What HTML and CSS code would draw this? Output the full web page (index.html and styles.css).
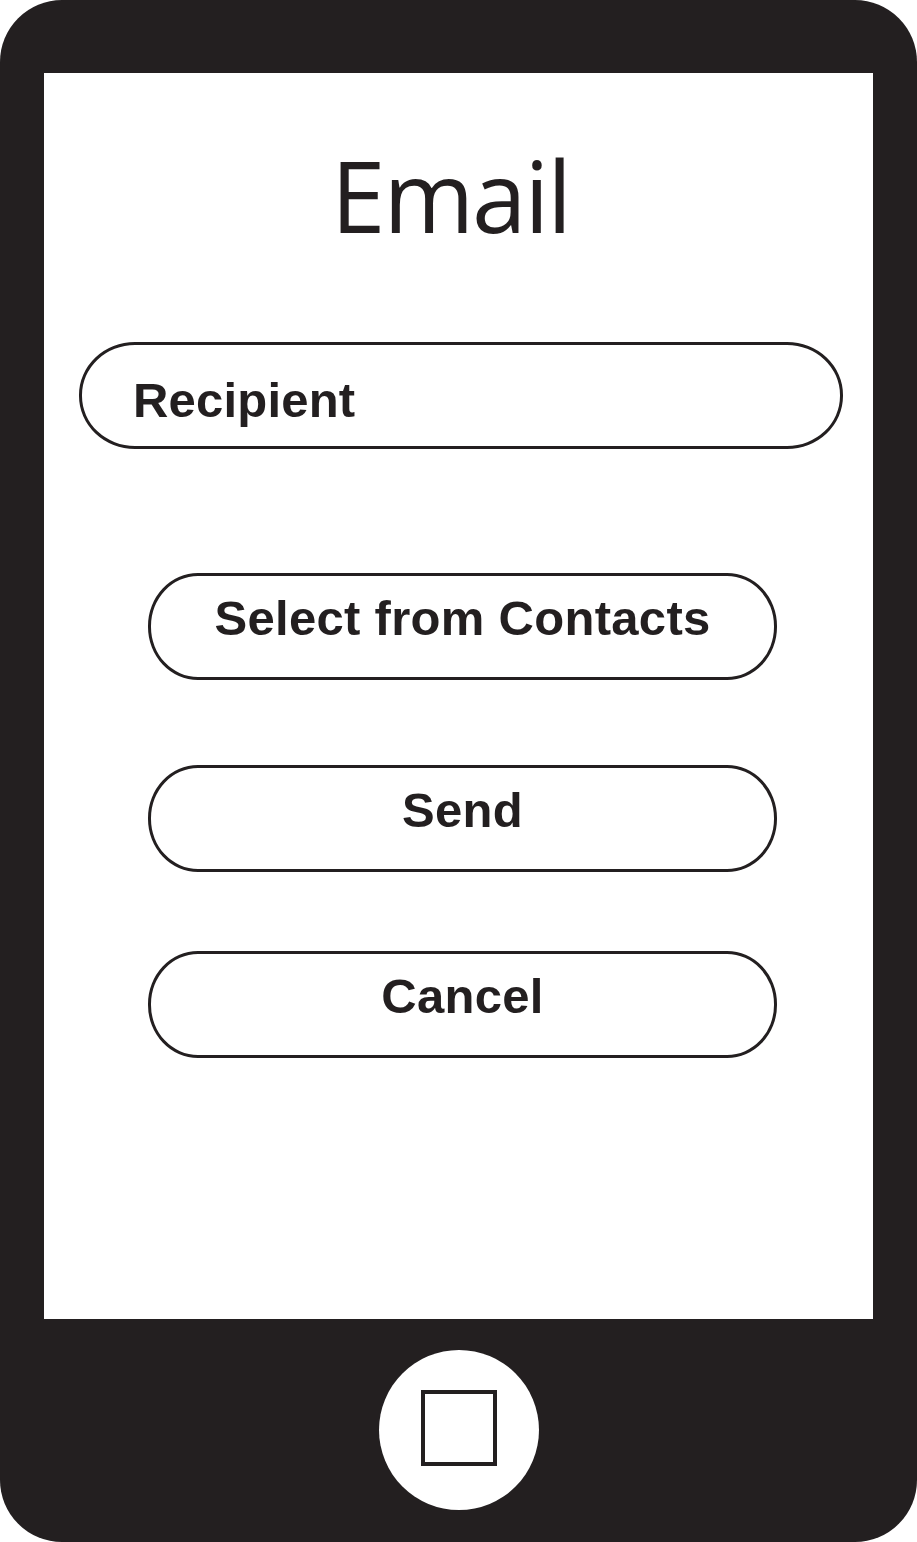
FILE: index.html
```html
<!DOCTYPE html>
<html lang="en">
<head>
  <meta charset="UTF-8">
  <meta name="viewport" content="width=device-width, initial-scale=1.0">
  <title>Email</title>
  <link rel="stylesheet" href="styles.css">
</head>
<body>

<div class="phone">
  <div class="screen">
    <h1 class="title">Email</h1>

    <div class="field">Recipient</div>

    <div class="actions">
      <button class="btn btn-contacts" type="button">Select from Contacts</button>
      <button class="btn" type="button">Send</button>
      <button class="btn" type="button">Cancel</button>
    </div>
  </div>

  <div class="bezel">
    <div class="home">
      <div class="home-square"></div>
    </div>
  </div>
</div>

</body>
</html>
```

FILE: styles.css
```css
body {
  margin: 0;
  background: #fff;
  font-family: "Liberation Sans", Arial, sans-serif;
  color: #231f20;
}
.phone {
  width: 917px;
  height: 1542px;
  box-sizing: border-box;
  padding: 73px 44px 0 44px;
  background: #231f20;
  border-radius: 62px;
  display: flex;
  flex-direction: column;
}
.screen {
  height: 1246px;
  background: #fff;
  display: flex;
  flex-direction: column;
  align-items: flex-start;
}
.title {
  align-self: stretch;
  margin: 73px 16px 0 0;
  font-family: "Open Sans", "Noto Sans", sans-serif;
  font-weight: 400;
  font-size: 98px;
  line-height: 1;
  letter-spacing: -2px;
  text-align: center;
}
.field {
  margin: 98px 0 0 35px;
  width: 764px;
  height: 107px;
  box-sizing: border-box;
  border: 3px solid #231f20;
  border-radius: 56px / 53px;
  padding: 10px 0 0 51px;
  display: flex;
  align-items: center;
  font-weight: 700;
  font-size: 49px;
  line-height: 1;
  letter-spacing: 0.2px;
}
.actions {
  margin: 124px 0 0 104px;
  display: flex;
  flex-direction: column;
  gap: 79px;
}
.btn {
  width: 629px;
  height: 107px;
  box-sizing: border-box;
  border: 3px solid #231f20;
  border-radius: 50px / 53px;
  background: #fff;
  color: #231f20;
  padding: 0 0 16px 0;
  font-family: "Liberation Sans", Arial, sans-serif;
  font-weight: 700;
  font-size: 49px;
  line-height: 1;
  letter-spacing: 0.3px;
  text-align: center;
}
.btn-contacts {
  margin-bottom: 6px;
}
.bezel {
  flex: 1;
  display: flex;
  align-items: center;
  justify-content: center;
  padding-bottom: 2px;
}
.home {
  width: 160px;
  height: 160px;
  border-radius: 50%;
  background: #fff;
  display: flex;
  align-items: center;
  justify-content: center;
  padding-bottom: 4px;
  box-sizing: border-box;
}
.home-square {
  width: 76px;
  height: 76px;
  box-sizing: border-box;
  border: 4px solid #231f20;
}
```
